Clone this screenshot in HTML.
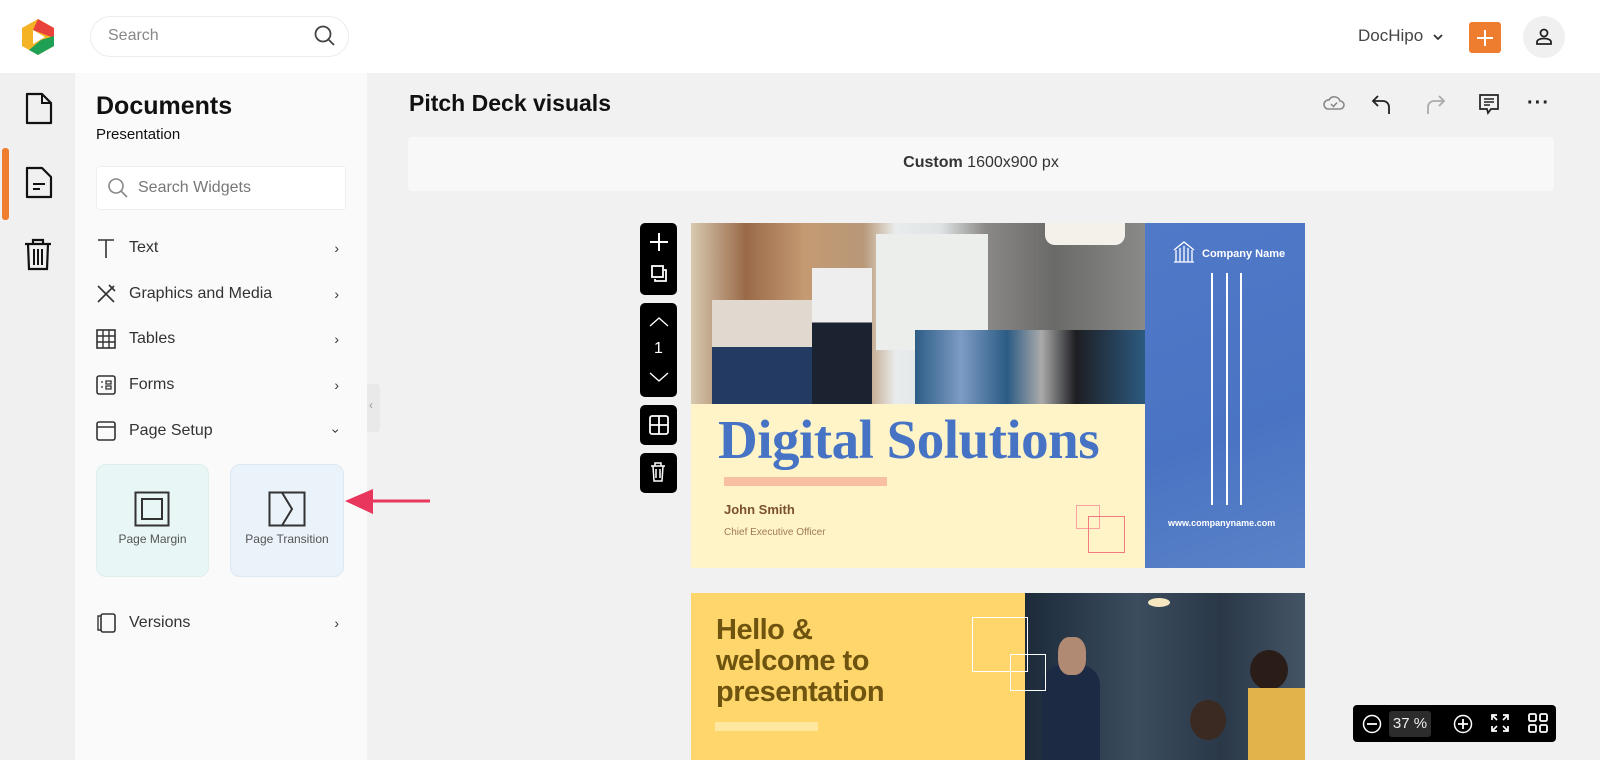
<!DOCTYPE html>
<html><head><meta charset="utf-8">
<style>
*{margin:0;padding:0;box-sizing:border-box}
body{width:1600px;height:760px;overflow:hidden;font-family:"Liberation Sans",sans-serif;background:#f1f1f1;position:relative;color:#222}
.abs{position:absolute}
.hdr{left:0;top:0;width:1600px;height:73px;background:#fff}
.rail{left:0;top:73px;width:75px;height:687px;background:#f0f0f0}
.panel{left:75px;top:73px;width:292px;height:687px;background:#fafafa}
.item{left:95px;width:250px;height:24px;font-size:16px;color:#333;display:flex;align-items:center}
.item svg{margin-right:12px}
.item .ch{position:absolute;right:6px;font-size:14px}
</style></head><body>
<div class="abs hdr"></div>
<svg class="abs" style="left:19px;top:18px" width="38" height="38" viewBox="0 0 38 38">
<path d="M19 1 L35 10 L35 28 L19 37 L3 28 L3 10Z" fill="#f4b324"/>
<path d="M19 1 L35 10 L35 20 L14 12Z" fill="#e8423b"/>
<path d="M35 18 L35 28 L19 37 L10 32 L22 22Z" fill="#1fa055"/>
<path d="M14 12 L26 19 L14 26Z" fill="#fff"/>
</svg>
<div class="abs" style="left:90px;top:16px;width:259px;height:41px;border:1px solid #ececec;border-radius:21px;background:#fff"></div>
<div class="abs" style="left:108px;top:27px;font-size:16px;color:#888">Search</div>
<svg class="abs" style="left:314px;top:25px" width="22" height="22" viewBox="0 0 22 22"><circle cx="9" cy="9" r="7.5" fill="none" stroke="#444" stroke-width="1.8"/><path d="M14.5 14.5L20 20" stroke="#444" stroke-width="1.8"/></svg>
<div class="abs" style="left:1358px;top:26px;font-size:17px;color:#444">DocHipo</div>
<svg class="abs" style="left:1432px;top:32px" width="12" height="10"><path d="M2 3L6 7L10 3" fill="none" stroke="#333" stroke-width="1.8"/></svg>
<div class="abs" style="left:1469px;top:22px;width:32px;height:31px;background:#ef7d2f;border-radius:3px"></div>
<svg class="abs" style="left:1475px;top:28px" width="20" height="20"><path d="M10 2V18M2 10H18" stroke="#fff" stroke-width="2"/></svg>
<div class="abs" style="left:1523px;top:16px;width:42px;height:42px;background:#f0f0f0;border-radius:50%"></div>
<svg class="abs" style="left:1533px;top:26px" width="22" height="22" viewBox="0 0 22 22"><circle cx="11" cy="7" r="3.5" fill="none" stroke="#222" stroke-width="1.8"/><path d="M4 18V16C4 13.5 8 12.5 11 12.5S18 13.5 18 16V18Z" fill="none" stroke="#222" stroke-width="1.8"/></svg>

<div class="abs rail"></div>
<div class="abs" style="left:2px;top:148px;width:7px;height:72px;background:#ef7d2f;border-radius:3px"></div>
<svg class="abs" style="left:24px;top:92px" width="30" height="34" viewBox="0 0 30 34"><path d="M3 2H18L27 11V31H3Z" fill="none" stroke="#111" stroke-width="2.2" stroke-linejoin="round"/><path d="M18 2V11H27" fill="none" stroke="#111" stroke-width="2"/></svg>
<svg class="abs" style="left:24px;top:166px" width="30" height="34" viewBox="0 0 30 34"><path d="M3 2H18L27 11V31H3Z" fill="none" stroke="#111" stroke-width="2.2" stroke-linejoin="round"/><path d="M9 18H21M9 23H16" stroke="#111" stroke-width="2"/></svg>
<svg class="abs" style="left:23px;top:238px" width="30" height="34" viewBox="0 0 30 34"><path d="M2 6H28M10 6V2H20V6M5 6L6 31H24L25 6" fill="none" stroke="#111" stroke-width="2.2"/><path d="M11 11V27M15 11V27M19 11V27" stroke="#111" stroke-width="2"/></svg>

<div class="abs panel"></div>
<div class="abs" style="left:96px;top:92px;font-size:25px;font-weight:bold;color:#111">Documents</div>
<div class="abs" style="left:96px;top:126px;font-size:15px;color:#111">Presentation</div>
<div class="abs" style="left:96px;top:166px;width:250px;height:44px;background:#fff;border:1px solid #eee;border-radius:4px"></div>
<svg class="abs" style="left:107px;top:177px" width="22" height="22" viewBox="0 0 22 22"><circle cx="9" cy="9" r="7" fill="none" stroke="#888" stroke-width="1.6"/><path d="M14 14L20 20" stroke="#888" stroke-width="1.6"/></svg>
<div class="abs" style="left:138px;top:179px;font-size:16px;color:#777">Search Widgets</div>

<div class="abs item" style="top:236px"><svg width="22" height="22"><path d="M3 3H19M11 3V21" stroke="#333" stroke-width="1.6" fill="none"/></svg>Text<span class="ch">›</span></div>
<div class="abs item" style="top:282px"><svg width="22" height="22"><path d="M3 3L19 19M19 3L3 19M14 2L20 8" stroke="#333" stroke-width="1.6" fill="none"/></svg>Graphics and Media<span class="ch">›</span></div>
<div class="abs item" style="top:327px"><svg width="22" height="22"><rect x="2" y="2" width="18" height="18" fill="none" stroke="#333" stroke-width="1.6"/><path d="M2 8H20M2 14H20M8 2V20M14 2V20" stroke="#333" stroke-width="1.4"/></svg>Tables<span class="ch">›</span></div>
<div class="abs item" style="top:373px"><svg width="22" height="22"><rect x="2" y="2" width="18" height="18" rx="2" fill="none" stroke="#333" stroke-width="1.6"/><path d="M6 8H8M6 13H8M11 7H16V10H11ZM11 12H16V15H11Z" stroke="#333" stroke-width="1.3" fill="none"/></svg>Forms<span class="ch">›</span></div>
<div class="abs item" style="top:419px"><svg width="22" height="22"><rect x="2" y="2" width="18" height="18" rx="2" fill="none" stroke="#333" stroke-width="1.6"/><path d="M2 7H20" stroke="#333" stroke-width="1.6"/></svg>Page Setup<span class="ch" style="transform:rotate(90deg)">›</span></div>
<div class="abs item" style="top:611px"><svg width="22" height="22"><rect x="6" y="2" width="14" height="18" rx="2" fill="none" stroke="#333" stroke-width="1.6"/><path d="M6 4H3V18H6" stroke="#333" stroke-width="1.4" fill="none"/></svg>Versions<span class="ch">›</span></div>

<div class="abs" style="left:96px;top:464px;width:113px;height:113px;background:#e8f6f5;border:1px solid #dcefee;border-radius:10px"></div>
<svg class="abs" style="left:134px;top:491px" width="36" height="36"><rect x="1.5" y="1.5" width="33" height="33" fill="none" stroke="#333" stroke-width="2"/><rect x="8" y="8" width="20" height="20" fill="none" stroke="#333" stroke-width="2"/></svg>
<div class="abs" style="left:96px;top:532px;width:113px;text-align:center;font-size:12px;color:#555">Page Margin</div>
<div class="abs" style="left:230px;top:464px;width:114px;height:113px;background:#eaf2fa;border:1px solid #dde8f3;border-radius:10px"></div>
<svg class="abs" style="left:268px;top:491px" width="38" height="36"><rect x="1.5" y="1.5" width="35" height="33" fill="none" stroke="#333" stroke-width="2"/><path d="M14 1.5L24 18L14 34.5" fill="none" stroke="#333" stroke-width="2"/></svg>
<div class="abs" style="left:230px;top:532px;width:114px;text-align:center;font-size:12px;color:#555">Page Transition</div>
<svg class="abs" style="left:343px;top:487px" width="88" height="30"><path d="M30 14H87" stroke="#e8365d" stroke-width="3"/><path d="M2 14L30 2V27Z" fill="#e8365d"/></svg>
<div class="abs" style="left:367px;top:384px;width:13px;height:48px;background:#e9e9e9;border-radius:0 4px 4px 0"></div>
<div class="abs" style="left:369px;top:398px;font-size:12px;color:#999">‹</div>

<div class="abs" style="left:409px;top:90px;font-size:23px;font-weight:bold;color:#111">Pitch Deck visuals</div>
<svg class="abs" style="left:1322px;top:92px" width="24" height="22"><path d="M6 17H18A4 4 0 0 0 18 9A6 6 0 0 0 7 8A4.5 4.5 0 0 0 6 17Z" fill="none" stroke="#888" stroke-width="1.6"/><path d="M9 12L11.5 14.5L15 10.5" fill="none" stroke="#888" stroke-width="1.5"/></svg>
<svg class="abs" style="left:1370px;top:92px" width="24" height="24"><path d="M8 4L3 9L8 14M3 9H13A6 6 0 0 1 19 15V22" fill="none" stroke="#222" stroke-width="1.8"/></svg>
<svg class="abs" style="left:1423px;top:92px" width="24" height="24"><path d="M16 4L21 9L16 14M21 9H11A6 6 0 0 0 5 15V22" fill="none" stroke="#aaa" stroke-width="1.8"/></svg>
<svg class="abs" style="left:1478px;top:93px" width="22" height="24"><path d="M2 2H20V16H13L10 20L9 16H2Z" fill="none" stroke="#222" stroke-width="1.7"/><path d="M6 6H16M6 9H16M6 12H12" stroke="#222" stroke-width="1.4"/></svg>
<div class="abs" style="left:1527px;top:92px;font-size:20px;font-weight:bold;color:#222;letter-spacing:1px">···</div>

<div class="abs" style="left:408px;top:137px;width:1146px;height:54px;background:#f8f8f8;border-radius:4px"></div>
<div class="abs" style="left:408px;top:154px;width:1146px;text-align:center;font-size:16px;color:#333"><b>Custom</b> 1600x900 px</div>

<div class="abs" style="left:640px;top:223px;width:37px;height:72px;background:#000;border-radius:5px"></div>
<svg class="abs" style="left:648px;top:231px" width="22" height="56"><path d="M11 2V20M2 11H20" stroke="#fff" stroke-width="2"/><rect x="4" y="35" width="11" height="11" fill="none" stroke="#fff" stroke-width="1.8"/><path d="M7 48V50H18V39H16" fill="none" stroke="#fff" stroke-width="1.8"/></svg>
<div class="abs" style="left:640px;top:303px;width:37px;height:94px;background:#000;border-radius:5px"></div>
<svg class="abs" style="left:648px;top:313px" width="22" height="76"><path d="M2 13L11 5L20 13M2 60L11 68L20 60" fill="none" stroke="#fff" stroke-width="1.4"/></svg>
<div class="abs" style="left:640px;top:340px;width:37px;text-align:center;color:#fff;font-size:16px">1</div>
<div class="abs" style="left:640px;top:405px;width:37px;height:40px;background:#000;border-radius:5px"></div>
<svg class="abs" style="left:649px;top:415px" width="20" height="20"><rect x="1" y="1" width="18" height="18" rx="2" fill="none" stroke="#fff" stroke-width="1.8"/><path d="M10 1V19M1 10H19" stroke="#fff" stroke-width="1.8"/></svg>
<div class="abs" style="left:640px;top:453px;width:37px;height:40px;background:#000;border-radius:5px"></div>
<svg class="abs" style="left:650px;top:462px" width="16" height="20"><path d="M1 4H15M5 4V1H11V4M3 4L4 19H12L13 4M6 7V16M10 7V16" fill="none" stroke="#fff" stroke-width="1.5"/></svg>

<!-- slide 1 photo -->
<div class="abs" style="left:691px;top:223px;width:454px;height:181px;background:linear-gradient(90deg,#d8c9b0 0%,#9a6a48 12%,#c49a72 25%,#b89878 38%,#e9ecec 45%,#dfe3e4 55%,#8a8886 65%,#6a6a68 80%,#8a8a88 100%)"></div>
<div class="abs" style="left:876px;top:234px;width:112px;height:116px;background:#eceeec"></div>
<div class="abs" style="left:1045px;top:223px;width:80px;height:22px;background:#f4f1ea;border-radius:0 0 10px 10px"></div>
<div class="abs" style="left:812px;top:268px;width:60px;height:136px;background:linear-gradient(#eee 0 40%,#1b2230 40%)"></div>
<div class="abs" style="left:712px;top:300px;width:100px;height:104px;background:linear-gradient(#e1d8d0 0 45%,#233a63 45%)"></div>
<div class="abs" style="left:915px;top:330px;width:230px;height:74px;background:linear-gradient(90deg,#2d5d86,#7d9cc4 20%,#2b5b84 40%,#aaa 55%,#1d1e22 70%,#2c5a80)"></div>
<div class="abs" style="left:691px;top:404px;width:454px;height:164px;background:#fff4c7"></div>
<div class="abs" style="left:718px;top:408px;font-family:'Liberation Serif',serif;font-weight:bold;font-size:55px;color:#4673c4;letter-spacing:-0.5px">Digital Solutions</div>
<div class="abs" style="left:724px;top:477px;width:163px;height:9px;background:#f9bfa2"></div>
<div class="abs" style="left:724px;top:502px;font-size:13px;font-weight:bold;color:#7a5030">John Smith</div>
<div class="abs" style="left:724px;top:527px;font-size:10px;color:#a0785a">Chief Executive Officer</div>
<div class="abs" style="left:1076px;top:505px;width:24px;height:24px;border:1px solid #f9a0a0"></div>
<div class="abs" style="left:1088px;top:516px;width:37px;height:37px;border:1.5px solid #f07a80"></div>
<div class="abs" style="left:1145px;top:223px;width:160px;height:345px;background:linear-gradient(160deg,#5079c8,#4a74c3 60%,#5a82c8)"></div>
<svg class="abs" style="left:1172px;top:240px" width="24" height="24"><path d="M2 22H22M4 22V10M8 22V8M12 22V6M16 22V8M20 22V10M2 10L12 2L22 10" fill="none" stroke="#fff" stroke-width="1.3"/></svg>
<div class="abs" style="left:1202px;top:248px;font-size:11px;font-weight:bold;color:#fff">Company Name</div>
<div class="abs" style="left:1211px;top:273px;width:2px;height:232px;background:#fff"></div>
<div class="abs" style="left:1226px;top:273px;width:2px;height:232px;background:#fff"></div>
<div class="abs" style="left:1240px;top:273px;width:2px;height:232px;background:#fff"></div>
<div class="abs" style="left:1168px;top:518px;font-size:9px;font-weight:bold;color:#fff">www.companyname.com</div>

<!-- slide 2 -->
<div class="abs" style="left:691px;top:593px;width:334px;height:167px;background:#fed66b"></div>
<div class="abs" style="left:716px;top:615px;font-size:29px;font-weight:bold;line-height:31px;color:#6f5410;letter-spacing:-0.5px">Hello &amp;<br>welcome to<br>presentation</div>
<div class="abs" style="left:715px;top:722px;width:103px;height:9px;background:#ffe7a0"></div>
<div class="abs" style="left:1025px;top:593px;width:280px;height:167px;background:linear-gradient(90deg,#1c2a3a,#3b4d5e 40%,#2a3848 70%,#445566)"></div>
<div class="abs" style="left:1148px;top:598px;width:22px;height:9px;background:#f6e7c0;border-radius:50%"></div>
<div class="abs" style="left:1042px;top:665px;width:58px;height:95px;background:#1c2a44;border-radius:20px 20px 0 0"></div>
<div class="abs" style="left:1058px;top:637px;width:28px;height:38px;background:#b08a72;border-radius:40%"></div>
<div class="abs" style="left:1250px;top:650px;width:38px;height:40px;background:#2a1c16;border-radius:50%"></div>
<div class="abs" style="left:1248px;top:688px;width:57px;height:72px;background:#e0b44a"></div>
<div class="abs" style="left:1190px;top:700px;width:36px;height:40px;background:#3a2a22;border-radius:50%"></div>
<div class="abs" style="left:972px;top:617px;width:56px;height:55px;border:1.5px solid #fff"></div>
<div class="abs" style="left:1010px;top:654px;width:36px;height:37px;border:1.5px solid #fff"></div>

<div class="abs" style="left:1353px;top:705px;width:203px;height:37px;background:#000;border-radius:4px"></div>
<svg class="abs" style="left:1362px;top:714px" width="20" height="20"><circle cx="10" cy="10" r="8.5" fill="none" stroke="#fff" stroke-width="1.5"/><path d="M5 10H15" stroke="#fff" stroke-width="1.8"/></svg>
<div class="abs" style="left:1389px;top:711px;width:42px;height:26px;background:#2c2c2c;border-radius:3px;color:#eee;font-size:15px;text-align:center;line-height:26px">37 %</div>
<svg class="abs" style="left:1453px;top:714px" width="20" height="20"><circle cx="10" cy="10" r="8.5" fill="none" stroke="#fff" stroke-width="1.5"/><path d="M5 10H15M10 5V15" stroke="#fff" stroke-width="1.8"/></svg>
<svg class="abs" style="left:1490px;top:713px" width="20" height="20"><path d="M2 7V2H7M2 2L7 7M13 2H18V7M18 2L13 7M2 13V18H7M2 18L7 13M18 13V18H13M18 18L13 13" fill="none" stroke="#fff" stroke-width="1.7"/></svg>
<svg class="abs" style="left:1528px;top:713px" width="20" height="20"><rect x="1" y="1" width="7" height="7" rx="1.5" fill="none" stroke="#fff" stroke-width="1.8"/><rect x="12" y="1" width="7" height="7" rx="1.5" fill="none" stroke="#fff" stroke-width="1.8"/><rect x="1" y="12" width="7" height="7" rx="1.5" fill="none" stroke="#fff" stroke-width="1.8"/><rect x="12" y="12" width="7" height="7" rx="1.5" fill="none" stroke="#fff" stroke-width="1.8"/></svg>
</body></html>
